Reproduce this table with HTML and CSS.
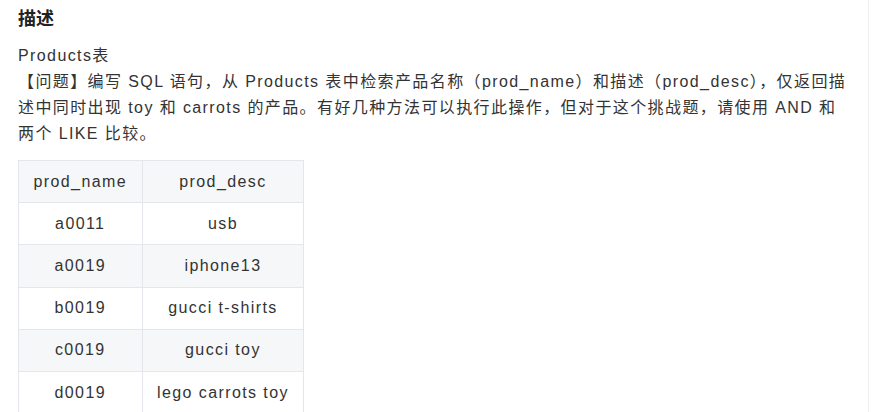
FILE: index.html
```html
<!DOCTYPE html>
<html lang="zh-CN">
<head>
<meta charset="utf-8">
<link rel="stylesheet" href="styles.css">
</head>
<body>
<div class="panel">
  <h2 class="title">描述</h2>
  <div class="desc">
    <p class="line">Products表</p>
    <p class="line">【问题】编写 SQL 语句，从 Products 表中检索产品名称（prod_name）和描述（prod_desc），仅返回描述中同时出现 toy 和 carrots 的产品。有好几种方法可以执行此操作，但对于这个挑战题，请使用 AND 和两个 LIKE 比较。</p>
  </div>
  <table class="data">
    <thead>
      <tr><th>prod_name</th><th>prod_desc</th></tr>
    </thead>
    <tbody>
      <tr><td>a0011</td><td>usb</td></tr>
      <tr class="alt"><td>a0019</td><td>iphone13</td></tr>
      <tr><td>b0019</td><td>gucci t-shirts</td></tr>
      <tr class="alt"><td>c0019</td><td>gucci toy</td></tr>
      <tr><td>d0019</td><td>lego carrots toy</td></tr>
    </tbody>
  </table>
</div>
</body>
</html>
```

FILE: styles.css
```css
html, body {
  margin: 0;
  padding: 0;
  background: #fff;
}
body {
  font-family: "Liberation Sans", "Noto Sans CJK SC", sans-serif;
  color: #333;
  width: 874px;
  height: 412px;
  overflow: hidden;
}
.panel {
  width: 869px;
  height: 412px;
  box-sizing: border-box;
  border-right: 1px solid #eeeff1;
  padding: 6px 0 0 18px;
}
.title {
  margin: 0;
  font-size: 18px;
  line-height: 26px;
  font-weight: bold;
  color: #222;
}
.desc {
  width: 831px;
  margin-top: 11px;
  font-size: 16px;
  line-height: 26px;
  letter-spacing: 1.4px;
  color: #333;
}
.line {
  margin: 0;
}
.data {
  margin-top: 13px;
  border-collapse: collapse;
  font-size: 16px;
  letter-spacing: 1.4px;
  color: #333;
}
.data th, .data td {
  border: 1px solid #e4e6eb;
  padding: 0 14.5px;
  height: 41.2px;
  text-align: center;
  font-weight: normal;
}
.data thead th {
  background: #f6f7f9;
}
.data tr.alt td {
  background: #f6f7f9;
}
```
